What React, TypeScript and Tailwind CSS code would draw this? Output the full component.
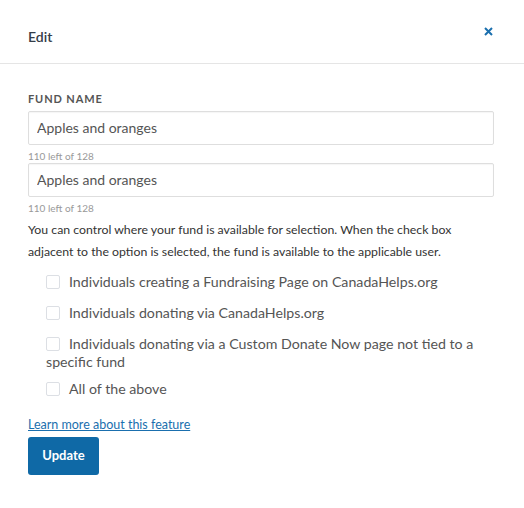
export default function App() {
  const options = [
    { label: "Individuals creating a Fundraising Page on CanadaHelps.org", cls: "mt-[10px]" },
    { label: "Individuals donating via CanadaHelps.org", cls: "mt-[13px]" },
    { label: "Individuals donating via a Custom Donate Now page not tied to a specific fund", cls: "mt-[13px]" },
    { label: "All of the above", cls: "mt-[9px]" },
  ];

  return (
    <div className="min-h-screen w-[524px] bg-white font-['Lato','Liberation_Sans',sans-serif]">
      {/* header */}
      <div className="flex h-[64px] items-center justify-between border-b border-[#e5e5e5] pl-[28px] pr-[31px]">
        <h2 className="pt-[10px] text-[14px] font-semibold text-[#353d48]">Edit</h2>
        <button className="text-[#1a6fae]">
          <svg width="9" height="9" viewBox="0 0 9 9">
            <path d="M1 1L8 8M8 1L1 8" stroke="currentColor" strokeWidth="2" />
          </svg>
        </button>
      </div>

      <div className="px-[28px] pt-[27px]">
        <label className="block text-[11px] font-bold tracking-[0.08em] text-[#555]">FUND NAME</label>

        <input
          defaultValue="Apples and oranges"
          className="mt-[3px] block h-[34px] w-[466px] rounded-[2px] border border-[#dedede] px-[8px] text-[14px] text-[#555] shadow-[inset_0_1px_1px_rgba(0,0,0,0.04)] outline-none"
        />
        <p className="mt-[4px] text-[10px] leading-[14px] text-[#999]">110 left of 128</p>

        <input
          defaultValue="Apples and oranges"
          className="block h-[34px] w-[466px] rounded-[2px] border border-[#dedede] px-[8px] text-[14px] text-[#555] shadow-[inset_0_1px_1px_rgba(0,0,0,0.04)] outline-none"
        />
        <p className="mt-[4px] text-[10px] leading-[14px] text-[#999]">110 left of 128</p>

        <p className="mt-[4px] text-[12.3px] leading-[22px] text-[#333]">
          You can control where your fund is available for selection. When the check box adjacent to the option is selected, the fund is available to the applicable user.
        </p>

        <div className="flex flex-col pl-[18px]">
          {options.map((o) => (
            <label key={o.label} className={`${o.cls} block text-[14.2px] leading-[18px] text-[#555]`}>
              <span className="relative top-[1px] mr-[9px] inline-block h-[14px] w-[14px] rounded-[2px] border border-[#dcdfe4] bg-white align-[-1px]" />
              {o.label}
            </label>
          ))}
        </div>

        <a href="#" className="mt-[19px] block text-[12.5px] leading-[16px] text-[#1a6fae] underline">
          Learn more about this feature
        </a>
        <button className="mt-[4px] h-[38px] w-[71px] rounded-[3px] bg-[#0f69a6] text-[13px] font-bold text-white">
          Update
        </button>
      </div>
    </div>
  );
}
